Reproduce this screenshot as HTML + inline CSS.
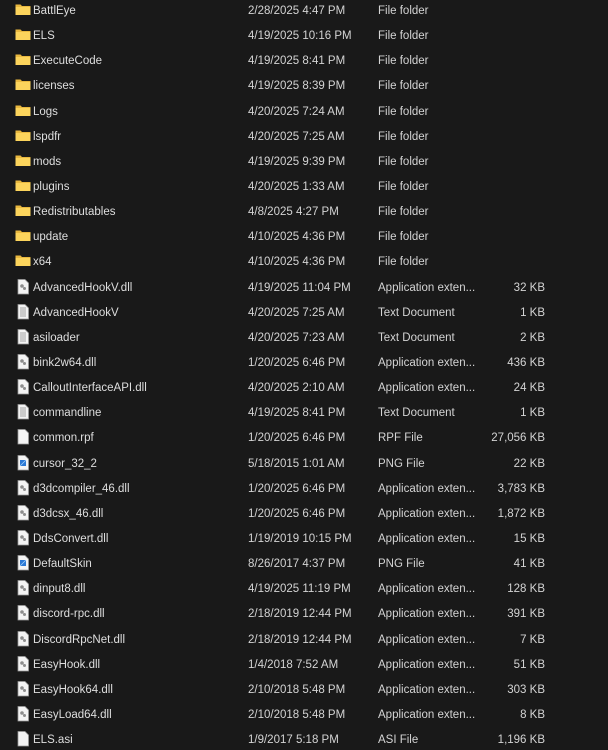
<!DOCTYPE html>
<html><head><meta charset="utf-8"><style>
html,body{margin:0;padding:0;background:#191919;width:608px;height:750px;overflow:hidden}
body{font-family:"Liberation Sans",sans-serif;font-size:11.5px;color:#dedede;position:relative}
.r{position:absolute;left:0;width:608px;height:25px;line-height:25px}
.r span{position:absolute;top:0;white-space:nowrap}
.n{left:33px}.d{left:248px;color:#d4d4d4}.t{left:378px;color:#d4d4d4}.s{right:63px;color:#d4d4d4}
.i{position:absolute;left:15px;top:2px;width:16px;height:17px}
</style></head><body>
<svg width="0" height="0" style="position:absolute">
<defs>
<symbol id="fold" viewBox="0 0 16 17"><path d="M0.5 3.5h5l1.5 1.5H15.5V14H0.5z" fill="#e9b83f"/><path d="M0.5 6h15V14H0.5z" fill="#fcd45c"/></symbol>
<symbol id="doc" viewBox="0 0 16 17"><path d="M3 1.5h7l3.5 3.5v11H3z" fill="#f4f4f4" stroke="#9a9a9a" stroke-width="0.8"/></symbol>
<symbol id="txt" viewBox="0 0 16 17"><path d="M3 1.5h7l3.5 3.5v11H3z" fill="#f4f4f4" stroke="#9a9a9a" stroke-width="0.8"/><path d="M5 5h6M5 7h6M5 9h6M5 11h6M5 13h6" stroke="#8a8a8a" stroke-width="0.8"/></symbol>
<symbol id="dll" viewBox="0 0 16 17"><path d="M3 1.5h7l3.5 3.5v11H3z" fill="#f4f4f4" stroke="#9a9a9a" stroke-width="0.8"/><circle cx="7" cy="8" r="1.8" fill="#8d8d8d"/><circle cx="9.5" cy="10.5" r="1.5" fill="#8d8d8d"/></symbol>
<symbol id="png" viewBox="0 0 16 17"><path d="M3 1.5h7l3.5 3.5v11H3z" fill="#f4f4f4" stroke="#9a9a9a" stroke-width="0.8"/><rect x="5" y="6" width="6" height="6" fill="#2b78d4"/><path d="M5 12l6-6" stroke="#9fd0ff" stroke-width="0.8"/></symbol>
</defs></svg>
<div id="list"></div>
<script>
var rows=[
["fold","BattlEye","2/28/2025 4:47 PM","File folder",""],
["fold","ELS","4/19/2025 10:16 PM","File folder",""],
["fold","ExecuteCode","4/19/2025 8:41 PM","File folder",""],
["fold","licenses","4/19/2025 8:39 PM","File folder",""],
["fold","Logs","4/20/2025 7:24 AM","File folder",""],
["fold","lspdfr","4/20/2025 7:25 AM","File folder",""],
["fold","mods","4/19/2025 9:39 PM","File folder",""],
["fold","plugins","4/20/2025 1:33 AM","File folder",""],
["fold","Redistributables","4/8/2025 4:27 PM","File folder",""],
["fold","update","4/10/2025 4:36 PM","File folder",""],
["fold","x64","4/10/2025 4:36 PM","File folder",""],
["dll","AdvancedHookV.dll","4/19/2025 11:04 PM","Application exten...","32 KB"],
["txt","AdvancedHookV","4/20/2025 7:25 AM","Text Document","1 KB"],
["txt","asiloader","4/20/2025 7:23 AM","Text Document","2 KB"],
["dll","bink2w64.dll","1/20/2025 6:46 PM","Application exten...","436 KB"],
["dll","CalloutInterfaceAPI.dll","4/20/2025 2:10 AM","Application exten...","24 KB"],
["txt","commandline","4/19/2025 8:41 PM","Text Document","1 KB"],
["doc","common.rpf","1/20/2025 6:46 PM","RPF File","27,056 KB"],
["png","cursor_32_2","5/18/2015 1:01 AM","PNG File","22 KB"],
["dll","d3dcompiler_46.dll","1/20/2025 6:46 PM","Application exten...","3,783 KB"],
["dll","d3dcsx_46.dll","1/20/2025 6:46 PM","Application exten...","1,872 KB"],
["dll","DdsConvert.dll","1/19/2019 10:15 PM","Application exten...","15 KB"],
["png","DefaultSkin","8/26/2017 4:37 PM","PNG File","41 KB"],
["dll","dinput8.dll","4/19/2025 11:19 PM","Application exten...","128 KB"],
["dll","discord-rpc.dll","2/18/2019 12:44 PM","Application exten...","391 KB"],
["dll","DiscordRpcNet.dll","2/18/2019 12:44 PM","Application exten...","7 KB"],
["dll","EasyHook.dll","1/4/2018 7:52 AM","Application exten...","51 KB"],
["dll","EasyHook64.dll","2/10/2018 5:48 PM","Application exten...","303 KB"],
["dll","EasyLoad64.dll","2/10/2018 5:48 PM","Application exten...","8 KB"],
["doc","ELS.asi","1/9/2017 5:18 PM","ASI File","1,196 KB"]];
var h="";
rows.forEach(function(r,i){var y=(10+i*25.14-11).toFixed(2);
h+='<div class="r" style="top:'+y+'px"><svg class="i"><use href="#'+r[0]+'"/></svg><span class="n">'+r[1]+'</span><span class="d">'+r[2]+'</span><span class="t">'+r[3]+'</span><span class="s">'+r[4]+'</span></div>';});
document.getElementById("list").innerHTML=h;
</script>
</body></html>
